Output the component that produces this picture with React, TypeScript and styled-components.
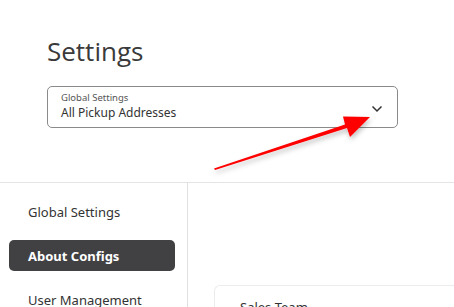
import styled, { createGlobalStyle } from "styled-components";

const GlobalStyle = createGlobalStyle`
  body {
    margin: 0;
    background: #ffffff;
    font-family: "Noto Sans", "Lato", sans-serif;
    color: #333333;
  }
`;

const Page = styled.div`
  position: relative;
  width: 454px;
  height: 307px;
  overflow: hidden;
`;

const Header = styled.header`
  height: 183px;
  padding: 33px 0 0 47px;
  box-sizing: border-box;
  border-bottom: 1px solid #e4e4e4;
`;

const Title = styled.h1`
  margin: 0 0 17px 0;
  font-family: "Open Sans", sans-serif;
  font-weight: 400;
  font-size: 26px;
  line-height: 36px;
  color: #3a3a3a;
`;

const Select = styled.div`
  width: 351px;
  height: 42px;
  box-sizing: border-box;
  border: 1px solid #8a8a8a;
  border-radius: 5px;
  padding: 5px 14px 0 13px;
  display: flex;
  align-items: center;
  justify-content: space-between;
`;

const SelectText = styled.div`
  display: flex;
  flex-direction: column;
  align-self: flex-start;
`;

const SelectLabel = styled.span`
  font-size: 9.5px;
  line-height: 12px;
  color: #555555;
`;

const SelectValue = styled.span`
  font-size: 12px;
  line-height: 18px;
  color: #333333;
`;

const Chevron = styled.svg`
  margin-bottom: 2px;
`;

const Body = styled.div`
  display: flex;
  height: 124px;
`;

const Sidebar = styled.nav`
  width: 188px;
  flex-shrink: 0;
  border-right: 1px solid #e0e0e0;
  padding: 13px 12px 0 9px;
  box-sizing: border-box;
  display: flex;
  flex-direction: column;
  gap: 13px;
`;

const NavItem = styled.div<{ $active?: boolean }>`
  height: 31px;
  flex-shrink: 0;
  border-radius: 5px;
  padding-left: 19px;
  display: flex;
  align-items: center;
  font-size: 13px;
  font-weight: ${(p) => (p.$active ? 700 : 400)};
  color: ${(p) => (p.$active ? "#ffffff" : "#333333")};
  background: ${(p) => (p.$active ? "#414143" : "transparent")};
`;

const Content = styled.main`
  flex: 1;
  padding: 102px 0 0 26px;
`;

const Card = styled.div`
  height: 60px;
  border: 1px solid #ececec;
  border-right: none;
  border-radius: 6px 0 0 6px;
  padding: 12px 0 0 25px;
  box-sizing: border-box;
  font-size: 13px;
  color: #333333;
`;

const Annotation = styled.svg`
  position: absolute;
  left: 0;
  top: 0;
  pointer-events: none;
`;

export default function App() {
  return (
    <Page>
      <GlobalStyle />
      <Header>
        <Title>Settings</Title>
        <Select>
          <SelectText>
            <SelectLabel>Global Settings</SelectLabel>
            <SelectValue>All Pickup Addresses</SelectValue>
          </SelectText>
          <Chevron width="12" height="8" viewBox="0 0 12 8">
            <path d="M1.5 1.5 L6 6 L10.5 1.5" fill="none" stroke="#333" strokeWidth="1.5" />
          </Chevron>
        </Select>
      </Header>
      <Body>
        <Sidebar>
          <NavItem>Global Settings</NavItem>
          <NavItem $active>About Configs</NavItem>
          <NavItem>User Management</NavItem>
        </Sidebar>
        <Content>
          <Card>Sales Team</Card>
        </Content>
      </Body>
      {/* red callout arrow pointing at the dropdown chevron */}
      <Annotation width="454" height="307" viewBox="0 0 454 307">
        <defs>
          <filter id="shadow" x="-20%" y="-50%" width="140%" height="200%">
            <feDropShadow dx="1" dy="3" stdDeviation="2.5" floodColor="#000" floodOpacity="0.25" />
          </filter>
        </defs>
        <path
          d="M215 170 L347 128 L350 137 L370 117 L343 116.5 L345 124.5 L214 168.5 Z"
          fill="#ff0000"
          filter="url(#shadow)"
        />
      </Annotation>
    </Page>
  );
}
